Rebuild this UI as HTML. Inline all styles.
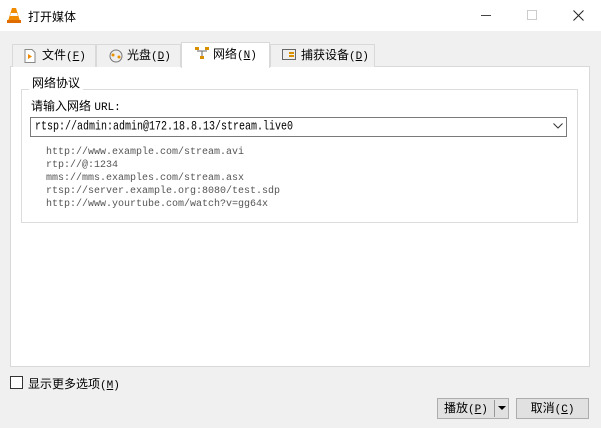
<!DOCTYPE html>
<html><head><meta charset="utf-8"><style>
*{margin:0;padding:0;box-sizing:border-box}
body{width:601px;height:428px;background:#f0f0f0;font-family:"Liberation Sans","Noto Sans CJK SC",sans-serif;font-size:12px;color:#000;position:relative;overflow:hidden}
.a{position:absolute}
.mono{font-family:"Liberation Mono","Noto Sans CJK SC",monospace}
.m{font-family:"Liberation Mono",monospace;font-size:11px}
.tab{position:absolute;top:44px;height:23px;border:1px solid #d9d9d9;border-bottom:none;background:#f0f0f0;line-height:21px;padding-left:29px}
.btn{position:absolute;top:398px;height:21px;border:1px solid #adadad;background:#e1e1e1;text-align:center;line-height:19px}
</style></head><body>
<div class="a" style="left:0;top:0;width:601px;height:31px;background:#fff"></div>
<svg class="a" style="left:7px;top:7px" width="14" height="16" viewBox="0 0 14 16"><path d="M5 1h4l4 13H1z" fill="#f08a00"/><path d="M4 6h6l1 3H3z" fill="#fff"/><rect x="0" y="13" width="14" height="3" fill="#e06c00"/></svg>
<div class="a" style="left:28px;top:8px">打开媒体</div>
<div class="a" style="left:481px;top:15px;width:10px;height:1px;background:#444"></div>
<div class="a" style="left:527px;top:10px;width:10px;height:10px;border:1px solid #ccc"></div>
<svg class="a" style="left:573px;top:10px" width="11" height="11"><path d="M.5.5l10 10M10.5.5l-10 10" stroke="#222"/></svg>

<div class="a" style="left:10px;top:66px;width:580px;height:301px;background:#fff;border:1px solid #d9d9d9"></div>
<div class="tab" style="left:12px;width:84px">文件<span class="m">(<u>F</u>)</span></div>
<div class="tab" style="left:96px;width:85px;padding-left:30px">光盘<span class="m">(<u>D</u>)</span></div>
<div class="tab" style="left:181px;top:42px;height:26px;width:89px;background:#fff;line-height:22px;padding-left:31px">网络<span class="m">(<u>N</u>)</span></div>
<div class="tab" style="left:270px;width:105px;padding-left:30px">捕获设备<span class="m">(<u>D</u>)</span></div>
<svg class="a" style="left:24px;top:49px" width="12" height="14"><path d="M1 .5h7l3 3v10H1z" fill="#fff" stroke="#888"/><path d="M4 5l4 2.5-4 2.5z" fill="#f08a00"/></svg>
<svg class="a" style="left:109px;top:49px" width="14" height="14"><circle cx="7" cy="7" r="6" fill="#eee" stroke="#777"/><circle cx="4" cy="6" r="1.5" fill="#e89000"/><circle cx="10" cy="8" r="1.5" fill="#e89000"/></svg>
<svg class="a" style="left:195px;top:46px" width="14" height="14"><rect x="0" y="1" width="4" height="3" fill="#d89000"/><rect x="10" y="1" width="4" height="3" fill="#d89000"/><rect x="5" y="10" width="4" height="3" fill="#d89000"/><path d="M2 5h10M7 5v5" stroke="#666"/></svg>
<svg class="a" style="left:282px;top:49px" width="14" height="13"><rect x=".5" y=".5" width="13" height="10" fill="#eee" stroke="#666"/><rect x="7" y="3" width="5" height="2" fill="#d89000"/><rect x="7" y="6" width="5" height="2" fill="#d89000"/></svg>

<div class="a" style="left:21px;top:89px;width:557px;height:134px;border:1px solid #dcdcdc"></div>
<div class="a" style="left:29px;top:74px;background:#fff;padding:0 3px">网络协议</div>
<div class="a" style="left:31px;top:97px">请输入网络 <span class="m">URL:</span></div>
<div class="a" style="left:30px;top:117px;width:537px;height:20px;border:1px solid #7a7a7a;background:#fff"></div>
<div class="a mono" style="left:35px;top:121px;font-size:10px;line-height:14px;transform:scaleY(1.25);transform-origin:0 50%">rtsp://admin:admin@172.18.8.13/stream.live0</div>
<svg class="a" style="left:553px;top:123px" width="10" height="6"><path d="M.5.5l4.5 4.5 4.5-4.5" fill="none" stroke="#333"/></svg>
<div class="a mono" style="left:46px;top:146px;font-size:10px;line-height:13px;color:#555">http://www.example.com/stream.avi<br>rtp://@:1234<br>mms://mms.examples.com/stream.asx<br>rtsp://server.example.org:8080/test.sdp<br>http://www.yourtube.com/watch?v=gg64x</div>

<div class="a" style="left:10px;top:376px;width:13px;height:13px;border:1px solid #333;background:#fff"></div>
<div class="a" style="left:28px;top:375px">显示更多选项<span class="m">(<u>M</u>)</span></div>

<div class="btn" style="left:437px;width:72px;text-align:left;padding-left:6px">播放<span class="m">(<u>P</u>)</span></div>
<div class="a" style="left:494px;top:400px;width:1px;height:17px;background:#999"></div>
<svg class="a" style="left:498px;top:406px" width="8" height="5"><path d="M0 0h8L4 4z" fill="#000"/></svg>
<div class="btn" style="left:516px;width:73px">取消<span class="m">(<u>C</u>)</span></div>
</body></html>
